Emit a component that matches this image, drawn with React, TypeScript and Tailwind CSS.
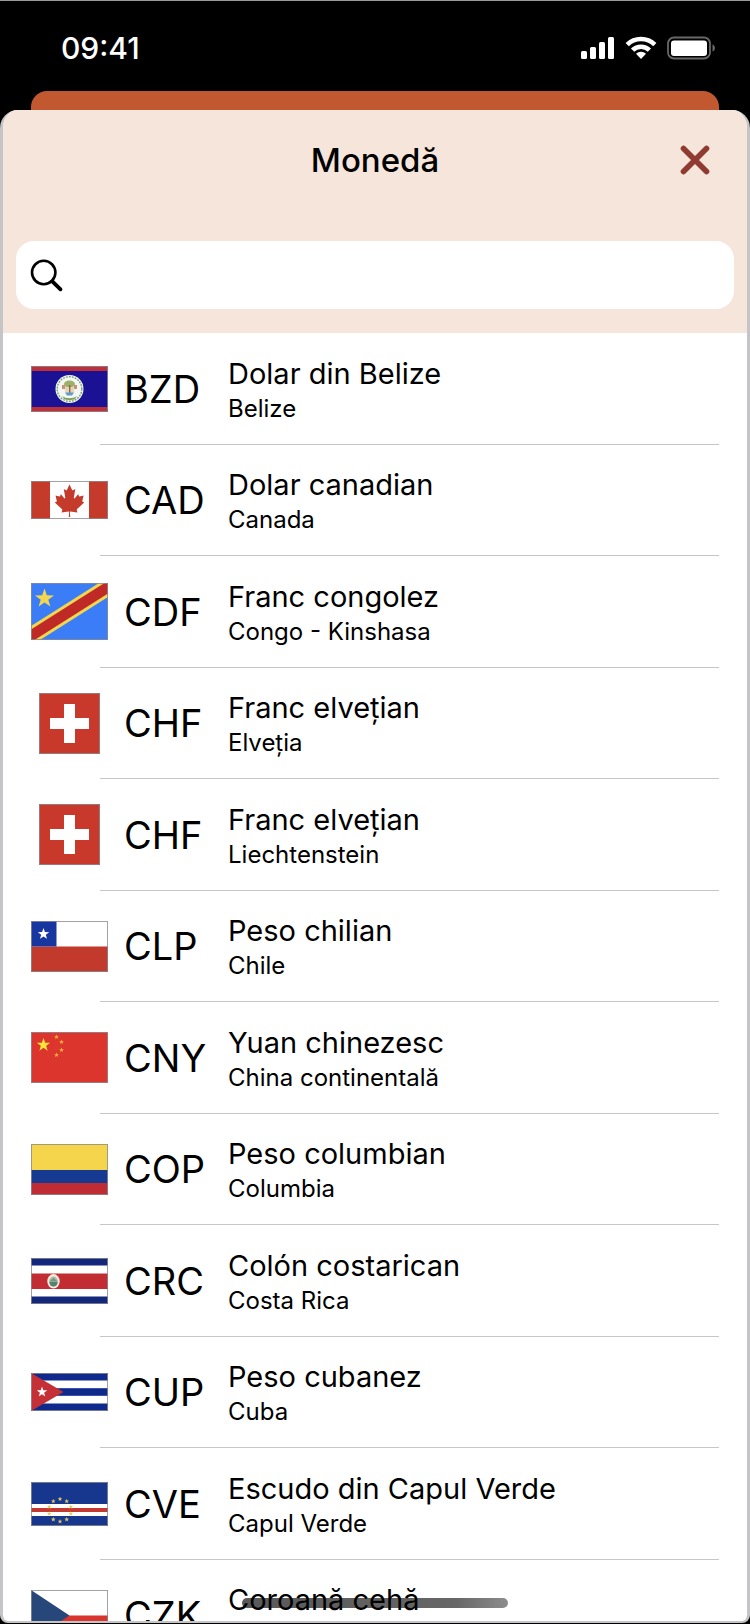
import type { ReactNode } from "react";

type Currency = {
  code: string;
  name: string;
  country?: string;
  flag: ReactNode;
};

const STAR =
  "M0 -10L2.35 -3.24L9.51 -3.09L3.8 1.24L5.88 8.09L0 4L-5.88 8.09L-3.8 1.24L-9.51 -3.09L-2.35 -3.24Z";

function Star({ x, y, r, fill }: { x: number; y: number; r: number; fill: string }) {
  return <path d={STAR} fill={fill} transform={`translate(${x} ${y}) scale(${r / 10})`} />;
}

function Flag({
  height,
  width = 77,
  children,
}: {
  height: number;
  width?: number;
  children: ReactNode;
}) {
  return (
    <svg width={width} height={height} viewBox={`0 0 ${width} ${height}`} aria-hidden="true">
      {children}
      <rect
        x="0.5"
        y="0.5"
        width={width - 1}
        height={height - 1}
        fill="none"
        stroke="#8b8b90"
        strokeOpacity="0.8"
      />
    </svg>
  );
}

const belize = (
  <Flag height={46}>
    <rect width="77" height="46" fill="#1b1194" />
    <rect width="77" height="5" fill="#bd3038" />
    <rect y="41" width="77" height="5" fill="#bd3038" />
    <circle cx="38.500" cy="23" r="14" fill="#f4f6f2" />
    <circle cx="38.500" cy="23" r="12.300" fill="none" stroke="#6c9b6c" strokeWidth="1.300" strokeDasharray="1.800 1.200" />
    <ellipse cx="38.500" cy="18" rx="5.500" ry="3.500" fill="#9db069" />
    <path d="M31 19h3v4h-3zM43 19h3v4h-3z" fill="#c98f78" />
    <path d="M34 21h9v5l-4.500 3.500L34 26z" fill="#e7d6b8" />
    <path d="M38 19h1.400v8H38z" fill="#8a6a45" />
    <path d="M34 26.500h9l-2 3h-5z" fill="#5d9ccb" />
    <path d="M31 30c4 3 11 3 15 0l-2 3c-3 1.500-8 1.500-11 0z" fill="#7ba05f" />
  </Flag>
);

const canada = (
  <Flag height={38}>
    <rect width="77" height="38" fill="#fff" />
    <rect width="19" height="38" fill="#c43b2b" />
    <rect x="58" width="19" height="38" fill="#c43b2b" />
    <path
      fill="#c43b2b"
      transform="translate(38.5 0) scale(0.88 1) translate(-38.5 0)"
      d="M38.500 3.500l-2.900 5.400c-.4.600-.9.500-1.500.200l-2.100-1.100 1.600 8.300c.3 1.500-.8 1.500-1.300.8l-3.700-4.100-.6 2.100c-.1.300-.4.600-.8.500l-4.600-1 1.200 4.500c.3 1 .5 1.400-.3 1.700l-1.700.8 8 6.500c.3.200.5.700.4 1.100l-.7 2.300c2.700-.3 5.200-.8 7.900-1.100.3 0 .7.300.7.700l-.4 5h1.600l-.3-5c0-.4.300-.7.600-.7 2.700.3 5.200.8 7.900 1.100l-.7-2.300c-.1-.4.100-.9.400-1.100l8-6.500-1.600-.8c-.8-.3-.6-.7-.3-1.700l1.200-4.500-4.600 1c-.4.100-.7-.2-.8-.5l-.6-2.100-3.700 4.100c-.5.700-1.600.7-1.300-.8l1.600-8.300-2.100 1.100c-.6.300-1.100.4-1.500-.2z"
    />
  </Flag>
);

const congo = (
  <Flag height={57}>
    <rect width="77" height="57" fill="#3a7df6" />
    <path d="M0 43L68 0H77V14L9 57H0Z" fill="#f2d64f" />
    <path d="M0 46.500L73.500 0H77V10.500L3.500 57H0Z" fill="#bf2a26" />
    <Star x={13.5} y={15.5} r={10} fill="#f2d64f" />
  </Flag>
);

const swiss = (
  <Flag width={61} height={61}>
    <rect width="61" height="61" fill="#c8392b" />
    <path d="M25 11h11v14h14v11H36v14H25V36H11V25h14z" fill="#fff" />
  </Flag>
);

const chile = (
  <Flag height={51}>
    <rect width="77" height="51" fill="#fff" />
    <rect y="25.500" width="77" height="25.500" fill="#c23a2b" />
    <rect width="25.500" height="25.500" fill="#1836a0" />
    <Star x={12.5} y={13} r={6} fill="#fff" />
  </Flag>
);

const china = (
  <Flag height={51}>
    <rect width="77" height="51" fill="#dc352e" />
    <Star x={12.5} y={13} r={7} fill="#fbe43c" />
    <Star x={25.5} y={5} r={2.6} fill="#f3b63c" />
    <Star x={30.5} y={10} r={2.6} fill="#f3b63c" />
    <Star x={30.5} y={18} r={2.6} fill="#f3b63c" />
    <Star x={25.5} y={23} r={2.6} fill="#f3b63c" />
  </Flag>
);

const colombia = (
  <Flag height={51}>
    <rect width="77" height="51" fill="#f5d54b" />
    <rect y="26" width="77" height="13" fill="#163a91" />
    <rect y="39" width="77" height="12" fill="#c02c33" />
  </Flag>
);

const costaRica = (
  <Flag height={46}>
    <rect width="77" height="46" fill="#fff" />
    <rect width="77" height="7.500" fill="#13277d" />
    <rect y="38.500" width="77" height="7.500" fill="#13277d" />
    <rect y="15.500" width="77" height="15.500" fill="#c22c33" />
    <ellipse cx="22.500" cy="23.300" rx="6.200" ry="7.300" fill="#f6ebe0" />
    <ellipse cx="22.500" cy="23.600" rx="4.500" ry="5" fill="#b9b9a6" />
    <path d="M18.500 23.500l4-4 4 4z" fill="#6d9a83" />
    <path d="M18.500 24h8c0 3-2 4.500-4 4.500s-4-1.500-4-4.500z" fill="#52816f" />
  </Flag>
);

const cuba = (
  <Flag height={38}>
    <rect width="77" height="38" fill="#fff" />
    <rect width="77" height="7.500" fill="#0f2a8c" />
    <rect y="15.200" width="77" height="7.600" fill="#0f2a8c" />
    <rect y="30.500" width="77" height="7.500" fill="#0f2a8c" />
    <path d="M0 0L32.500 19L0 38Z" fill="#c43036" />
    <Star x={11} y={19} r={5.5} fill="#fff" />
  </Flag>
);

const capeVerdeStars: [number, number][] = [
  [29, 17],
  [35.7, 19.2],
  [39.8, 24.8],
  [39.8, 31.8],
  [35.7, 37.4],
  [29, 39.5],
  [22.3, 37.4],
  [18.2, 31.8],
  [18.2, 24.8],
  [22.3, 19.2],
];

const capeVerde = (
  <Flag height={44}>
    <rect width="77" height="44" fill="#17378f" />
    <rect y="22" width="77" height="12" fill="#fff" />
    <rect y="26" width="77" height="4" fill="#c43a33" />
    {capeVerdeStars.map(([x, y]) => (
      <Star key={`${x}-${y}`} x={x} y={y} r={2.5} fill="#e5cf58" />
    ))}
  </Flag>
);

const czechia = (
  <Flag height={51}>
    <rect width="77" height="51" fill="#fff" />
    <rect y="25.500" width="77" height="25.500" fill="#d8352e" />
    <path d="M0 0L38.500 25.500L0 51Z" fill="#27477b" />
  </Flag>
);

const currencies: Currency[] = [
  { code: "BZD", name: "Dolar din Belize", country: "Belize", flag: belize },
  { code: "CAD", name: "Dolar canadian", country: "Canada", flag: canada },
  { code: "CDF", name: "Franc congolez", country: "Congo - Kinshasa", flag: congo },
  { code: "CHF", name: "Franc elvețian", country: "Elveția", flag: swiss },
  { code: "CHF", name: "Franc elvețian", country: "Liechtenstein", flag: swiss },
  { code: "CLP", name: "Peso chilian", country: "Chile", flag: chile },
  { code: "CNY", name: "Yuan chinezesc", country: "China continentală", flag: china },
  { code: "COP", name: "Peso columbian", country: "Columbia", flag: colombia },
  { code: "CRC", name: "Colón costarican", country: "Costa Rica", flag: costaRica },
  { code: "CUP", name: "Peso cubanez", country: "Cuba", flag: cuba },
  { code: "CVE", name: "Escudo din Capul Verde", country: "Capul Verde", flag: capeVerde },
  { code: "CZK", name: "Coroană cehă", flag: czechia },
];

function StatusBar() {
  return (
    <div className="flex h-[90px] shrink-0 items-center justify-between pt-1 pr-[34px] pl-[61px] text-white">
      <span className="text-[30px] leading-9 font-medium">09:41</span>
      <div className="flex items-center gap-[10px]">
        <svg width="34" height="24" viewBox="0 0 34 24" fill="#fff" aria-hidden="true">
          <rect x="0" y="15" width="6" height="8" rx="1.500" />
          <rect x="9" y="11" width="6" height="12" rx="1.500" />
          <rect x="18" y="6" width="6" height="17" rx="1.500" />
          <rect x="27" y="1" width="6" height="22" rx="1.500" />
        </svg>
        <svg width="32" height="24" viewBox="0 0 32 24" aria-hidden="true">
          <g fill="none" stroke="#fff" strokeWidth="4.600">
            <path d="M2.200 8.700a19.500 19.500 0 0 1 27.600 0" />
            <path d="M7.600 14.200a11.800 11.800 0 0 1 16.800 0" />
          </g>
          <path d="M16 23l-5-5.200a7 7 0 0 1 10 0z" fill="#fff" />
        </svg>
        <svg width="49" height="24" viewBox="0 0 49 24" aria-hidden="true">
          <rect x="1" y="1.500" width="42" height="21" rx="6" fill="none" stroke="#68686b" strokeWidth="1.800" />
          <rect x="4" y="4.500" width="36" height="15.500" rx="3" fill="#fff" />
          <path d="M45.500 8.500c3.300 1 3.300 6 0 7z" fill="#68686b" />
        </svg>
      </div>
    </div>
  );
}

function CurrencyRow({ code, name, country, flag }: Currency) {
  return (
    <li className="flex shrink-0 flex-col odd:h-[112px] even:h-[111px]">
      <button type="button" className="flex min-h-0 flex-1 items-center pl-7 text-left">
        <span className="flex w-[77px] shrink-0 justify-center">{flag}</span>
        <span className="ml-4 w-[104px] shrink-0 text-[38px] leading-[46px]">{code}</span>
        <span className="flex min-w-0 flex-col pt-1">
          <span className="text-[29px] leading-9">{name}</span>
          <span className="min-h-[34px] text-[24px] leading-[34px]">{country}</span>
        </span>
      </button>
      <div className="mr-7 ml-[97px] h-px shrink-0 bg-[#c6c6c8]" />
    </li>
  );
}

export default function App() {
  return (
    <div className="relative flex h-screen flex-col overflow-hidden border-t border-[#9a9a9a] bg-black font-['Inter','Noto_Sans',sans-serif] text-black">
      <StatusBar />
      <div className="mx-[31px] h-[19px] shrink-0 rounded-t-2xl bg-[#c25830]" />
      <main className="mb-px flex min-h-0 flex-1 flex-col overflow-hidden rounded-t-[18px] rounded-b-lg border-x-[3px] border-b-2 border-[#c5c5c8] bg-white">
        <header className="flex shrink-0 flex-col bg-[#f6e5da] px-[13px] pb-6">
          <div className="grid h-[131px] grid-cols-[1fr_auto_1fr] items-start pt-6">
            <h1 className="col-start-2 text-[33px] leading-[52px] font-medium">Monedă</h1>
            <div className="flex h-[52px] items-center justify-self-end pr-6">
              <button type="button" aria-label="Închide" className="flex">
                <svg width="30" height="30" viewBox="0 0 30 30" aria-hidden="true">
                  <path d="M3.500 3.500L26.500 26.500M26.500 3.500L3.500 26.500" stroke="#8f3b31" strokeWidth="5.600" strokeLinecap="round" />
                </svg>
              </button>
            </div>
          </div>
          <label className="flex h-[68px] items-center gap-3 rounded-[18px] bg-white px-[14px]">
            <svg width="34" height="34" viewBox="0 0 34 34" fill="none" stroke="#000" aria-hidden="true">
              <circle cx="13.700" cy="14.500" r="11.700" strokeWidth="2.600" />
              <path d="M22.300 23.300L30.500 31.300" strokeWidth="3.800" strokeLinecap="round" />
            </svg>
            <input
              type="search"
              aria-label="Caută"
              className="h-full min-w-0 flex-1 bg-transparent text-[29px] outline-none"
            />
          </label>
        </header>
        <ul className="flex min-h-0 flex-1 flex-col overflow-y-auto [scrollbar-width:none]">
          {currencies.map((currency, index) => (
            <CurrencyRow key={index} {...currency} />
          ))}
        </ul>
      </main>
      <div className="pointer-events-none absolute bottom-4 left-1/2 h-[10px] w-[266px] -translate-x-1/2 rounded-full bg-linear-to-r from-black/65 via-black/60 via-80% to-black/45" />
    </div>
  );
}
